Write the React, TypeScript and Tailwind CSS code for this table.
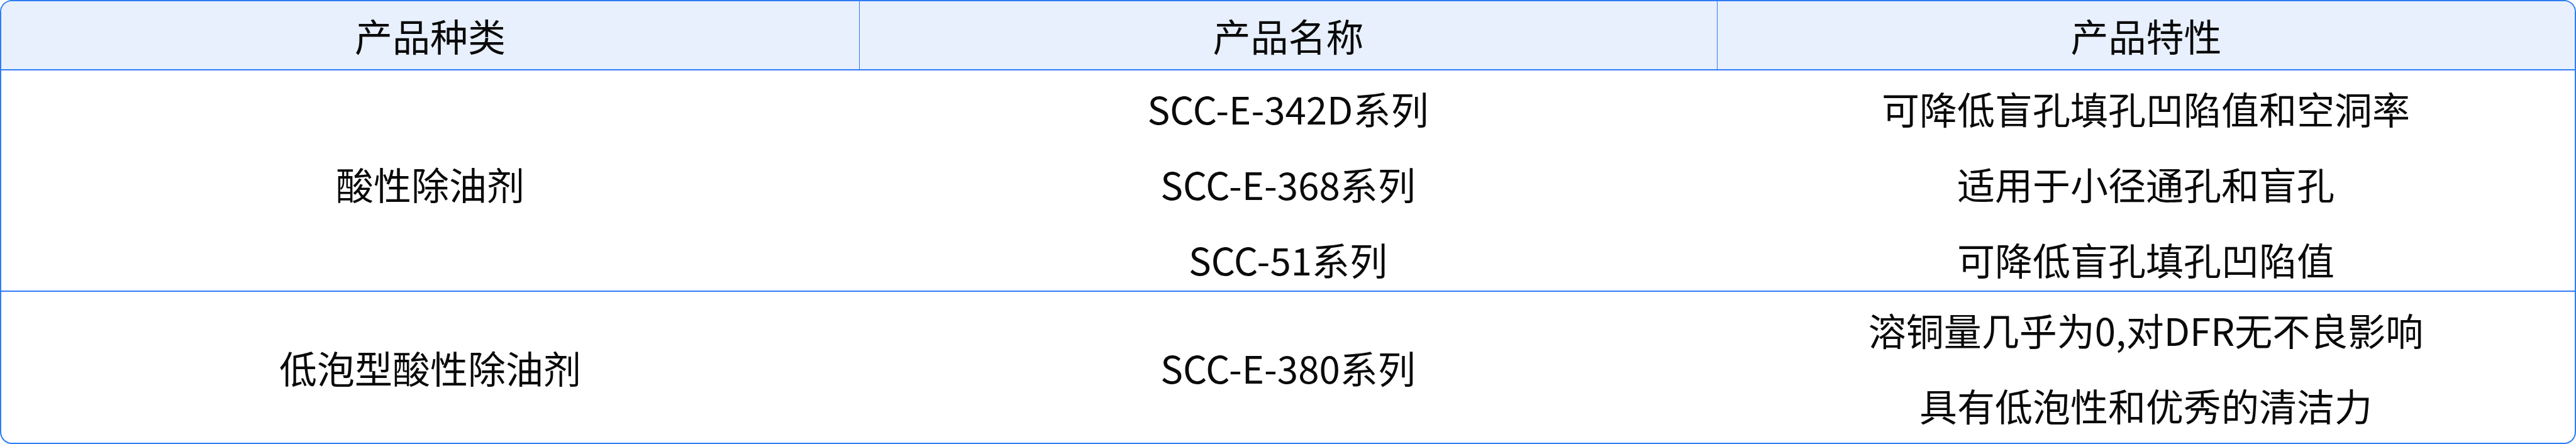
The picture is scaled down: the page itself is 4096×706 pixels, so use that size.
const headers = ["产品种类", "产品名称", "产品特性"];

const rows = [
  {
    kind: "酸性除油剂",
    names: ["SCC-E-342D系列", "SCC-E-368系列", "SCC-51系列"],
    features: ["可降低盲孔填孔凹陷值和空洞率", "适用于小径通孔和盲孔", "可降低盲孔填孔凹陷值"],
    height: "h-[352px] border-b-2",
  },
  {
    kind: "低泡型酸性除油剂",
    names: ["SCC-E-380系列"],
    features: ["溶铜量几乎为0,对DFR无不良影响", "具有低泡性和优秀的清洁力"],
    height: "flex-1",
  },
];

function Cell({ lines }: { lines: string[] }) {
  return (
    <div className="flex flex-col items-center justify-center">
      {lines.map((line) => (
        <div key={line} className="leading-[120px] whitespace-nowrap">
          {line}
        </div>
      ))}
    </div>
  );
}

export default function App() {
  return (
    <div
      className="w-[4096px] h-[706px] bg-white flex flex-col border-2 border-[#2e7cf6] rounded-[19px] overflow-hidden text-[60px] text-[#0a0a0a]"
      style={{ fontFamily: '"Noto Sans CJK SC", "Noto Sans", sans-serif' }}
    >
      {/* header */}
      <div className="grid grid-cols-3 h-[117px] bg-[#e8f0fd] border-b-2 border-[#2e7cf6]">
        {headers.map((title, i) => (
          <div
            key={title}
            className={
              i > 0
                ? "flex items-center justify-center border-l border-[#2e7cf6]"
                : "flex items-center justify-center"
            }
          >
            {title}
          </div>
        ))}
      </div>
      {/* body */}
      {rows.map((row) => (
        <div
          key={row.kind}
          className={`grid grid-cols-3 border-[#2e7cf6] ${row.height}`}
        >
          <Cell lines={[row.kind]} />
          <Cell lines={row.names} />
          <Cell lines={row.features} />
        </div>
      ))}
    </div>
  );
}
